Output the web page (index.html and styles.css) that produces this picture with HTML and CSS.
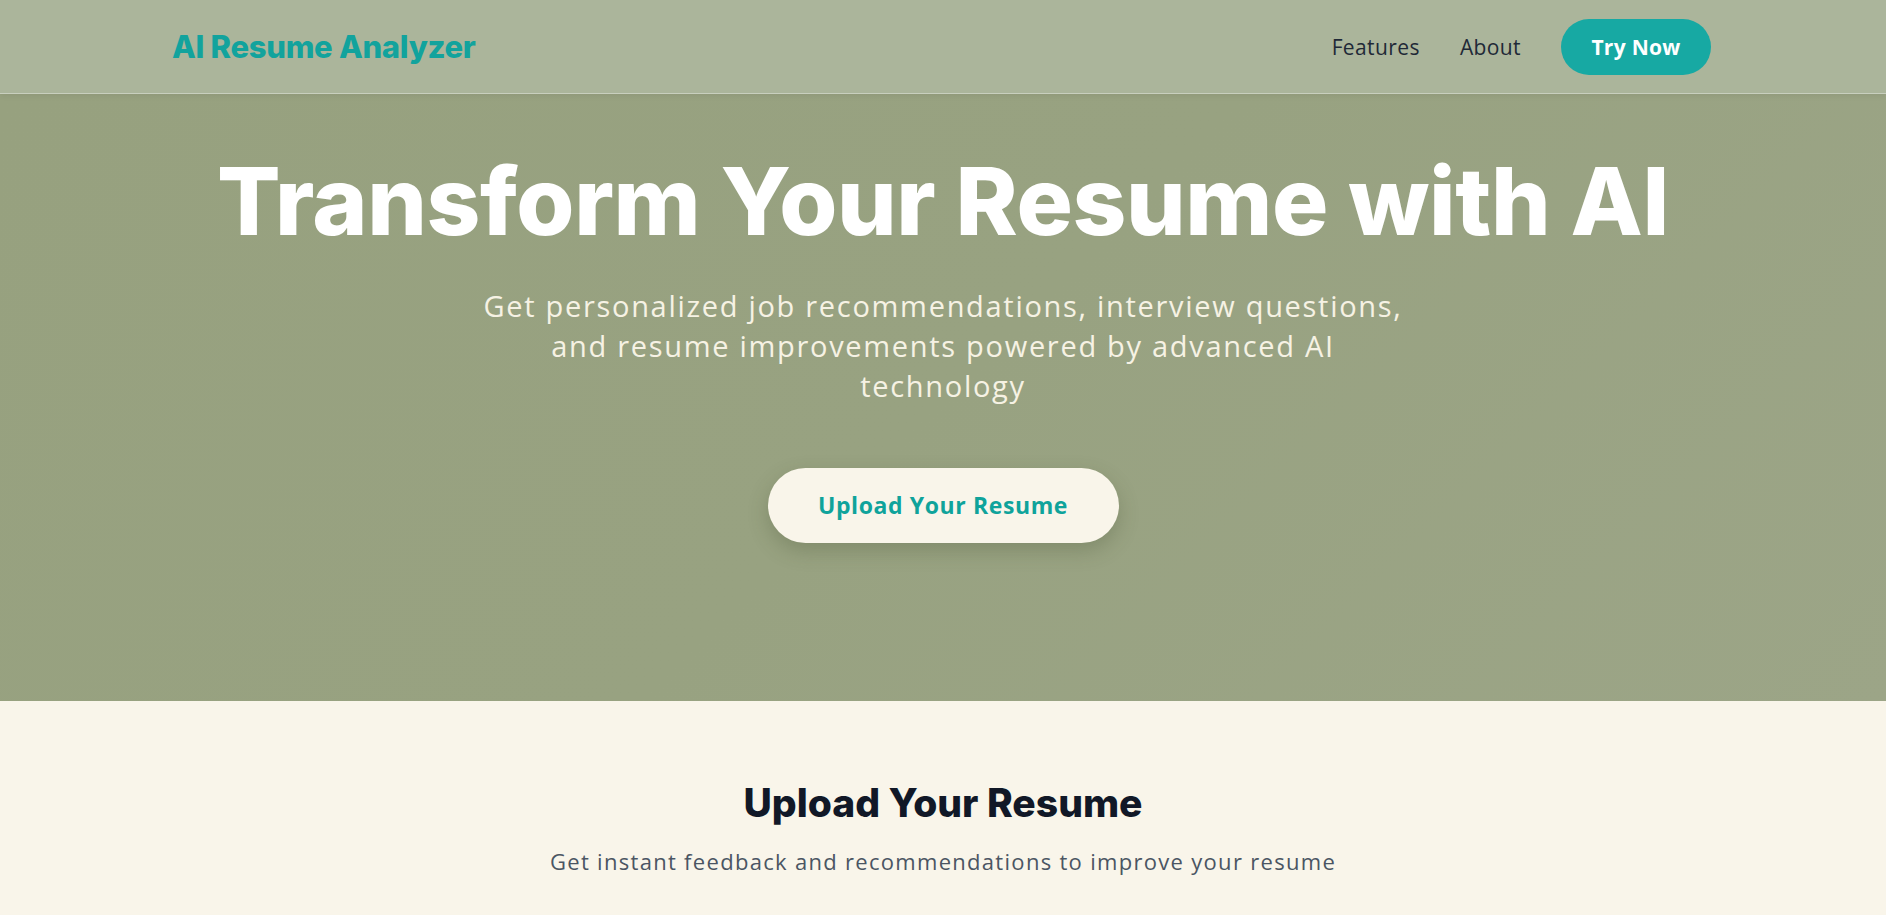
FILE: index.html
```html
<!DOCTYPE html>
<html lang="en">
<head>
<meta charset="utf-8">
<title>AI Resume Analyzer</title>
<link rel="stylesheet" href="styles.css">
</head>
<body>
<header class="nav">
  <div class="nav-inner">
    <a class="logo" href="#">AI Resume Analyzer</a>
    <nav class="nav-links">
      <a href="#features">Features</a>
      <a href="#about">About</a>
      <a class="btn-try" href="#upload">Try Now</a>
    </nav>
  </div>
</header>
<section class="hero">
  <h1 class="hero-title">Transform Your Resume with AI</h1>
  <p class="hero-sub">Get personalized job recommendations, interview questions, and resume improvements powered by advanced AI technology</p>
  <a class="btn-upload" href="#upload">Upload Your Resume</a>
</section>
<section class="upload" id="upload">
  <h2 class="upload-title">Upload Your Resume</h2>
  <p class="upload-sub">Get instant feedback and recommendations to improve your resume</p>
</section>
</body>
</html>
```
FILE: styles.css
```css
* { box-sizing: border-box; }
html, body { margin: 0; padding: 0; }
body {
  font-family: "Open Sans", "Noto Sans", sans-serif;
  background: #f9f5ea;
  overflow: hidden;
}
a { text-decoration: none; }

.nav {
  background: #abb59b;
  height: 94px;
  border-bottom: 1px solid rgba(255,255,255,0.35);
  box-shadow: 0 2px 6px rgba(0,0,0,0.06);
  position: relative;
  z-index: 2;
}
.nav-inner {
  height: 100%;
  padding: 0 175px 0 172px;
  display: flex;
  align-items: center;
  justify-content: space-between;
}
.logo {
  font-family: "Inter", sans-serif;
  font-weight: 800;
  font-size: 31px;
  color: #12a39d;
  letter-spacing: -0.3px;
}
.nav-links {
  display: flex;
  align-items: center;
  gap: 40px;
}
.nav-links a {
  color: #1f2937;
  font-size: 21px;
  letter-spacing: 0.4px;
}
.nav-links a.btn-try {
  background: #17a9a3;
  color: #fff;
  font-weight: 700;
  width: 150px;
  height: 56px;
  border-radius: 28px;
  display: flex;
  align-items: center;
  justify-content: center;
  font-size: 21px;
  letter-spacing: 0.3px;
}

.hero {
  height: 607px;
  background: linear-gradient(135deg, #97a17f 0%, #98a281 50%, #9ca587 100%);
  display: flex;
  flex-direction: column;
  align-items: center;
  padding-top: 51px;
  text-align: center;
}
.hero-title {
  margin: 0;
  font-family: "Inter", sans-serif;
  font-weight: 800;
  font-size: 94px;
  line-height: 1.2;
  color: #fff;
  letter-spacing: -0.4px;
}
.hero-sub {
  margin: 28px 0 0;
  max-width: 940px;
  font-size: 29px;
  line-height: 40px;
  letter-spacing: 1.7px;
  color: #f6f2e4;
}
.btn-upload {
  margin-top: 62px;
  width: 351px;
  height: 75px;
  border-radius: 38px;
  background: #f9f5ea;
  color: #0fa39b;
  font-weight: 700;
  font-size: 23px;
  letter-spacing: 0.6px;
  display: flex;
  align-items: center;
  justify-content: center;
  box-shadow: 0 8px 20px rgba(60,70,40,0.25);
}

.upload {
  text-align: center;
  padding-top: 78px;
}
.upload-title {
  margin: 0;
  font-family: "Inter", sans-serif;
  font-weight: 800;
  font-size: 39px;
  color: #111827;
}
.upload-sub {
  margin: 20px 0 0;
  font-size: 22px;
  letter-spacing: 1.3px;
  color: #4b5563;
}
```
